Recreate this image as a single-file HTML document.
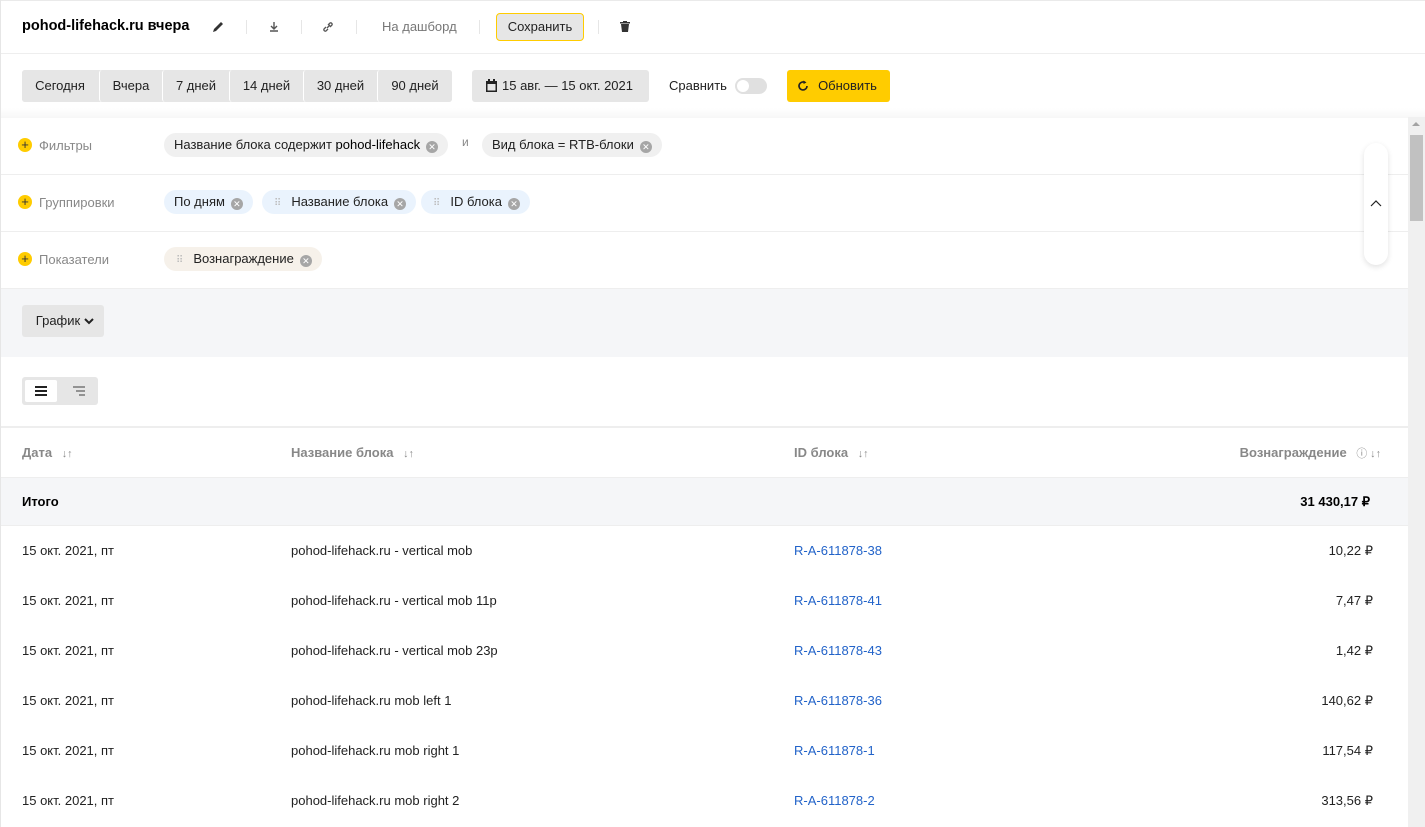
<!DOCTYPE html>
<html><head><meta charset="utf-8"><style>
*{box-sizing:border-box;margin:0;padding:0}
body{width:1425px;height:827px;overflow:hidden;background:#fff;font-family:"Liberation Sans","Noto Sans CJK SC",sans-serif;font-size:13px;color:#222;position:relative}
.abs{position:absolute}
.sep{position:absolute;top:20px;width:1px;height:14px;background:#e6e6e6}
.btn{position:absolute;height:32px;line-height:32px;background:#e6e6e6;border-radius:3px;text-align:center;font-size:13px;color:#222}
.chip{position:absolute;height:24px;line-height:24px;border-radius:12px;padding:0 10px;font-size:13px;color:#222;white-space:nowrap}
.x{display:inline-block;width:12px;height:12px;border-radius:50%;background:#a6a6a6;color:#fff;font-size:9px;line-height:12px;text-align:center;vertical-align:-1px;margin-left:6px}
.plus{position:absolute;left:18px;width:14px;height:14px;border-radius:50%;background:#fc0;color:#333;font-size:13px;line-height:14px;text-align:center}
.lab{position:absolute;left:39px;color:#888}
.hl{position:absolute;left:0;width:1408px;height:1px;background:#eee}
.row{position:absolute;left:0;width:1408px;height:50px}
.row span{position:absolute;top:17px}
a{color:#2263c9;text-decoration:none}
.dots{color:#bbb;margin-right:10px;margin-left:2px;font-size:10px}
</style></head><body>
<div class="hl" style="top:0;width:1425px;background:#eaeaea"></div>
<div class="abs" style="left:22px;top:18px;font-size:14.5px;font-weight:bold;color:#000">pohod-lifehack.ru вчера</div>
<svg class="abs" style="left:211px;top:20px" width="14" height="14" viewBox="0 0 14 14"><path d="M2 12l1-3 7-7 2 2-7 7z" fill="#333"/></svg>
<div class="sep" style="left:246px"></div>
<svg class="abs" style="left:268px;top:21px" width="12" height="12" viewBox="0 0 12 12"><path d="M6 1v6M3 5l3 3 3-3M2 10h8" stroke="#555" stroke-width="1.4" fill="none"/></svg>
<div class="sep" style="left:301px"></div>
<svg class="abs" style="left:322px;top:21px" width="12" height="12" viewBox="0 0 12 12"><path d="M5 7l3-3M4 6L2 8a1.5 1.5 0 002 2l2-2M8 6l2-2a1.5 1.5 0 00-2-2L6 4" stroke="#555" stroke-width="1.3" fill="none"/></svg>
<div class="sep" style="left:356px"></div>
<div class="abs" style="left:382px;top:19px;color:#777">На дашборд</div>
<div class="sep" style="left:479px"></div>
<div class="btn" style="left:496px;top:13px;width:88px;height:28px;line-height:26px;border:1px solid #fc0;border-radius:4px">Сохранить</div>
<div class="sep" style="left:598px"></div>
<svg class="abs" style="left:619px;top:20px" width="12" height="13" viewBox="0 0 12 13"><path d="M1 2h10v1.5H1zM4 1h4v1H4zM2 4h8l-1 8H3z" fill="#333"/></svg>
<div class="hl" style="top:53px;width:1425px"></div>

<div class="abs" style="left:22px;top:70px;width:430px;height:32px;background:#e6e6e6;border-radius:3px"></div>
<div class="btn" style="left:22px;top:70px;width:76px">Сегодня</div>
<div class="btn" style="left:99px;top:70px;width:63px;border-left:1px solid #fff">Вчера</div>
<div class="btn" style="left:162px;top:70px;width:67px;border-left:1px solid #fff">7 дней</div>
<div class="btn" style="left:229px;top:70px;width:74px;border-left:1px solid #fff">14 дней</div>
<div class="btn" style="left:303px;top:70px;width:74px;border-left:1px solid #fff">30 дней</div>
<div class="btn" style="left:377px;top:70px;width:75px;border-left:1px solid #fff">90 дней</div>
<div class="btn" style="left:472px;top:70px;width:177px;padding-left:14px"><svg class="abs" style="left:13px;top:9px" width="13" height="14" viewBox="0 0 13 14"><path d="M1 2h11v11H1z" fill="#222"/><rect x="3" y="0" width="2" height="3" fill="#222"/><rect x="8" y="0" width="2" height="3" fill="#222"/><rect x="2.5" y="5" width="8" height="6.5" fill="#e6e6e6"/></svg>15 авг. — 15 окт. 2021</div>
<div class="abs" style="left:669px;top:78px">Сравнить</div>
<div class="abs" style="left:735px;top:78px;width:32px;height:16px;border-radius:8px;background:#e0e0e0"><div class="abs" style="left:2px;top:2px;width:12px;height:12px;border-radius:50%;background:#fff"></div></div>
<div class="btn" style="left:787px;top:70px;width:103px;background:#fc0;padding-left:18px">Обновить<svg class="abs" style="left:10px;top:10px" width="12" height="12" viewBox="0 0 12 12"><path d="M10 6a4 4 0 11-2-3.5" stroke="#222" stroke-width="1.6" fill="none"/><path d="M6.5 0.5l3 2-3 1.5z" fill="#222"/></svg></div>
<div class="abs" style="left:0;top:108px;width:1425px;height:10px;background:linear-gradient(#fff,#f7f7f7)"></div>

<div class="plus" style="top:138px">+</div><div class="lab" style="top:138px">Фильтры</div>
<div class="chip" style="left:164px;top:133px;background:#f0f0f0">Название блока содержит <span style="color:#000">pohod-lifehack</span><span class="x">✕</span></div>
<div class="abs" style="left:462px;top:135px;color:#888;font-size:12px">и</div>
<div class="chip" style="left:482px;top:133px;background:#f0f0f0">Вид блока = RTB-блоки<span class="x">✕</span></div>
<div class="hl" style="top:174px"></div>
<div class="plus" style="top:195px">+</div><div class="lab" style="top:195px">Группировки</div>
<div class="chip" style="left:164px;top:190px;background:#eaf3fd">По дням<span class="x">✕</span></div>
<div class="chip" style="left:262px;top:190px;background:#eaf3fd"><span class="dots">⠿</span>Название блока<span class="x">✕</span></div>
<div class="chip" style="left:421px;top:190px;background:#eaf3fd"><span class="dots">⠿</span>ID блока<span class="x">✕</span></div>
<div class="hl" style="top:231px"></div>
<div class="plus" style="top:252px">+</div><div class="lab" style="top:252px">Показатели</div>
<div class="chip" style="left:164px;top:247px;background:#f6f1ea"><span class="dots">⠿</span>Вознаграждение<span class="x">✕</span></div>
<div class="abs" style="left:1364px;top:143px;width:24px;height:122px;border-radius:12px;background:#fff;box-shadow:0 2px 6px rgba(0,0,0,.12)"></div>
<svg class="abs" style="left:1370px;top:198px" width="12" height="10" viewBox="0 0 12 10"><path d="M1 8l5-5 5 5" stroke="#222" stroke-width="1.2" fill="none"/></svg>

<div class="abs" style="left:0;top:288px;width:1408px;height:69px;background:#f5f6f8;border-top:1px solid #eee"></div>
<div class="btn" style="left:22px;top:305px;width:82px;padding-right:10px">График<svg class="abs" style="left:62px;top:13px" width="10" height="7" viewBox="0 0 10 7"><path d="M1 1l4 4 4-4" stroke="#222" stroke-width="2" fill="none"/></svg></div>

<div class="abs" style="left:22px;top:377px;width:76px;height:28px;background:#e6e6e6;border-radius:3px"></div>
<div class="abs" style="left:25px;top:380px;width:32px;height:22px;background:#fff;border-radius:2px"></div>
<svg class="abs" style="left:35px;top:386px" width="12" height="10"><path d="M0 1h12M0 5h12M0 9h12" stroke="#222" stroke-width="2"/></svg>
<svg class="abs" style="left:73px;top:386px" width="12" height="10"><path d="M0 1h12M3 5h9M6 9h6" stroke="#777" stroke-width="1.5"/></svg>

<div class="hl" style="top:426px;height:2px"></div>
<div class="row" style="top:428px;height:49px;font-weight:bold;color:#888"><span style="left:22px">Дата <small style="margin-left:6px;font-weight:normal">↓↑</small></span><span style="left:291px">Название блока <small style="margin-left:6px;font-weight:normal">↓↑</small></span><span style="left:794px">ID блока <small style="margin-left:6px;font-weight:normal">↓↑</small></span><span style="right:27px">Вознаграждение <small style="margin-left:6px;font-weight:normal">ⓘ ↓↑</small></span></div>
<div class="row" style="top:477px;height:49px;background:#f5f6f8;font-weight:bold;color:#000;border-top:1px solid #eee;border-bottom:1px solid #eee"><span style="left:22px;top:16px">Итого</span><span style="right:38px;top:16px">31 430,17 ₽</span></div>
<div class="row" style="top:526px"><span style="left:22px">15 окт. 2021, пт</span><span style="left:291px">pohod-lifehack.ru - vertical mob</span><span style="left:794px"><a>R-A-611878-38</a></span><span style="right:35px">10,22 ₽</span></div>
<div class="row" style="top:576px"><span style="left:22px">15 окт. 2021, пт</span><span style="left:291px">pohod-lifehack.ru - vertical mob 11p</span><span style="left:794px"><a>R-A-611878-41</a></span><span style="right:35px">7,47 ₽</span></div>
<div class="row" style="top:626px"><span style="left:22px">15 окт. 2021, пт</span><span style="left:291px">pohod-lifehack.ru - vertical mob 23p</span><span style="left:794px"><a>R-A-611878-43</a></span><span style="right:35px">1,42 ₽</span></div>
<div class="row" style="top:676px"><span style="left:22px">15 окт. 2021, пт</span><span style="left:291px">pohod-lifehack.ru mob left 1</span><span style="left:794px"><a>R-A-611878-36</a></span><span style="right:35px">140,62 ₽</span></div>
<div class="row" style="top:726px"><span style="left:22px">15 окт. 2021, пт</span><span style="left:291px">pohod-lifehack.ru mob right 1</span><span style="left:794px"><a>R-A-611878-1</a></span><span style="right:35px">117,54 ₽</span></div>
<div class="row" style="top:776px"><span style="left:22px">15 окт. 2021, пт</span><span style="left:291px">pohod-lifehack.ru mob right 2</span><span style="left:794px"><a>R-A-611878-2</a></span><span style="right:35px">313,56 ₽</span></div>

<div class="abs" style="left:1408px;top:117px;width:17px;height:710px;background:#f0f0f0"></div>
<div class="abs" style="left:1410px;top:135px;width:13px;height:86px;background:#c1c1c1"></div>
<div class="abs" style="left:1412px;top:122px;width:0;height:0;border-left:4px solid transparent;border-right:4px solid transparent;border-bottom:4px solid #a3a3a3"></div>
<div class="abs" style="left:0;top:0;width:1px;height:827px;background:#e6e6e6"></div>
</body></html>
